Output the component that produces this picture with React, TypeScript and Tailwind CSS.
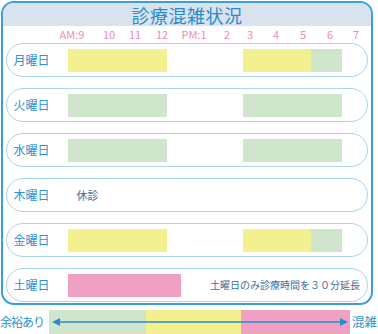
const Y = '#f2f08f';
const G = '#d0e6cc';
const P = '#f0a1c3';

// x positions in px on the page; the track starts at x=68
const hours = [
  { label: 'AM:9', x: 72 },
  { label: '10', x: 109 },
  { label: '11', x: 135 },
  { label: '12', x: 162 },
  { label: 'PM:1', x: 194 },
  { label: '2', x: 227 },
  { label: '3', x: 250 },
  { label: '4', x: 276 },
  { label: '5', x: 303 },
  { label: '6', x: 330 },
  { label: '7', x: 356 },
];

type Seg = { from: number; to: number; color: string };

const days: { name: string; segs: Seg[]; closed?: boolean; note?: string }[] = [
  { name: '月曜日', segs: [{ from: 68, to: 167, color: Y }, { from: 243, to: 311, color: Y }, { from: 311, to: 342, color: G }] },
  { name: '火曜日', segs: [{ from: 68, to: 167, color: G }, { from: 243, to: 342, color: G }] },
  { name: '水曜日', segs: [{ from: 68, to: 167, color: G }, { from: 243, to: 342, color: G }] },
  { name: '木曜日', segs: [], closed: true },
  { name: '金曜日', segs: [{ from: 68, to: 167, color: Y }, { from: 243, to: 311, color: Y }, { from: 311, to: 342, color: G }] },
  { name: '土曜日', segs: [{ from: 68, to: 181, color: P }], note: '土曜日のみ診療時間を３０分延長' },
];

function DayRow({ day }: { day: (typeof days)[number] }) {
  let prev = 68;
  return (
    <div className="flex items-center h-[34px] rounded-full border-[1.5px] border-[#a9d5ee] bg-white">
      <div className="w-[60.5px] pl-[6.5px] text-[12px] leading-none text-[#2b91d2]">{day.name}</div>
      <div className="flex flex-1 items-center h-[23px]">
        {day.segs.map((s, i) => {
          const ml = s.from - prev;
          prev = s.to;
          return (
            <div
              key={i}
              className="h-[23px]"
              style={{ marginLeft: ml, width: s.to - s.from, background: s.color }}
            />
          );
        })}
        {day.closed && <span className="ml-[9px] text-[11px] leading-none text-[#3b6f9f]">休診</span>}
        {day.note && (
          <span className="ml-auto mr-[7px] text-[10px] leading-none text-[#3b6f9f]">{day.note}</span>
        )}
      </div>
    </div>
  );
}

export default function App() {
  return (
    <div
      className="w-[378px] h-[334px] bg-white overflow-hidden"
      style={{ fontFamily: '"Noto Sans CJK JP", "Noto Sans", sans-serif' }}
    >
      <div className="ml-[1px] mt-[1px] w-[372px] h-[304px] border-2 border-[#3a9edc] rounded-[13px] overflow-hidden bg-white">
        <div className="h-[23px] bg-[#d9e3ee] flex items-center justify-center">
          <span className="text-[18px] leading-none text-[#2a8ccc] tracking-[0.5px]">診療混雑状況</span>
        </div>
        <div className="relative h-[17px]">
          {hours.map(h => (
            <span
              key={h.label}
              className="absolute top-[3px] -translate-x-1/2 text-[11px] leading-none text-[#ee8db1]"
              style={{ left: h.x - 3 }}
            >
              {h.label}
            </span>
          ))}
        </div>
        <div className="flex flex-col gap-[11px] px-[3px]">
          {days.map(d => (
            <DayRow key={d.name} day={d} />
          ))}
        </div>
      </div>

      <div className="flex items-center mt-[5px] h-[24px]">
        <span className="w-[49px] text-[12px] leading-none text-[#2b91d2] tracking-[-1px]">余裕あり</span>
        <div className="relative flex w-[301px] h-[24px]">
          <div className="w-[97px] bg-[#d0e6cc]" />
          <div className="w-[95px] bg-[#f2f08f]" />
          <div className="w-[109px] bg-[#f0a1c3]" />
          <svg className="absolute inset-0" width="301" height="24" viewBox="0 0 301 24">
            <line x1="8" y1="12" x2="292" y2="12" stroke="#2a8ccc" strokeWidth="1.5" />
            <polygon points="3,12 11,8 11,16" fill="#2a8ccc" />
            <polygon points="299,12 291,8 291,16" fill="#2a8ccc" />
          </svg>
        </div>
        <span className="ml-[2px] text-[12.5px] leading-none text-[#2b91d2]">混雑</span>
      </div>
    </div>
  );
}
